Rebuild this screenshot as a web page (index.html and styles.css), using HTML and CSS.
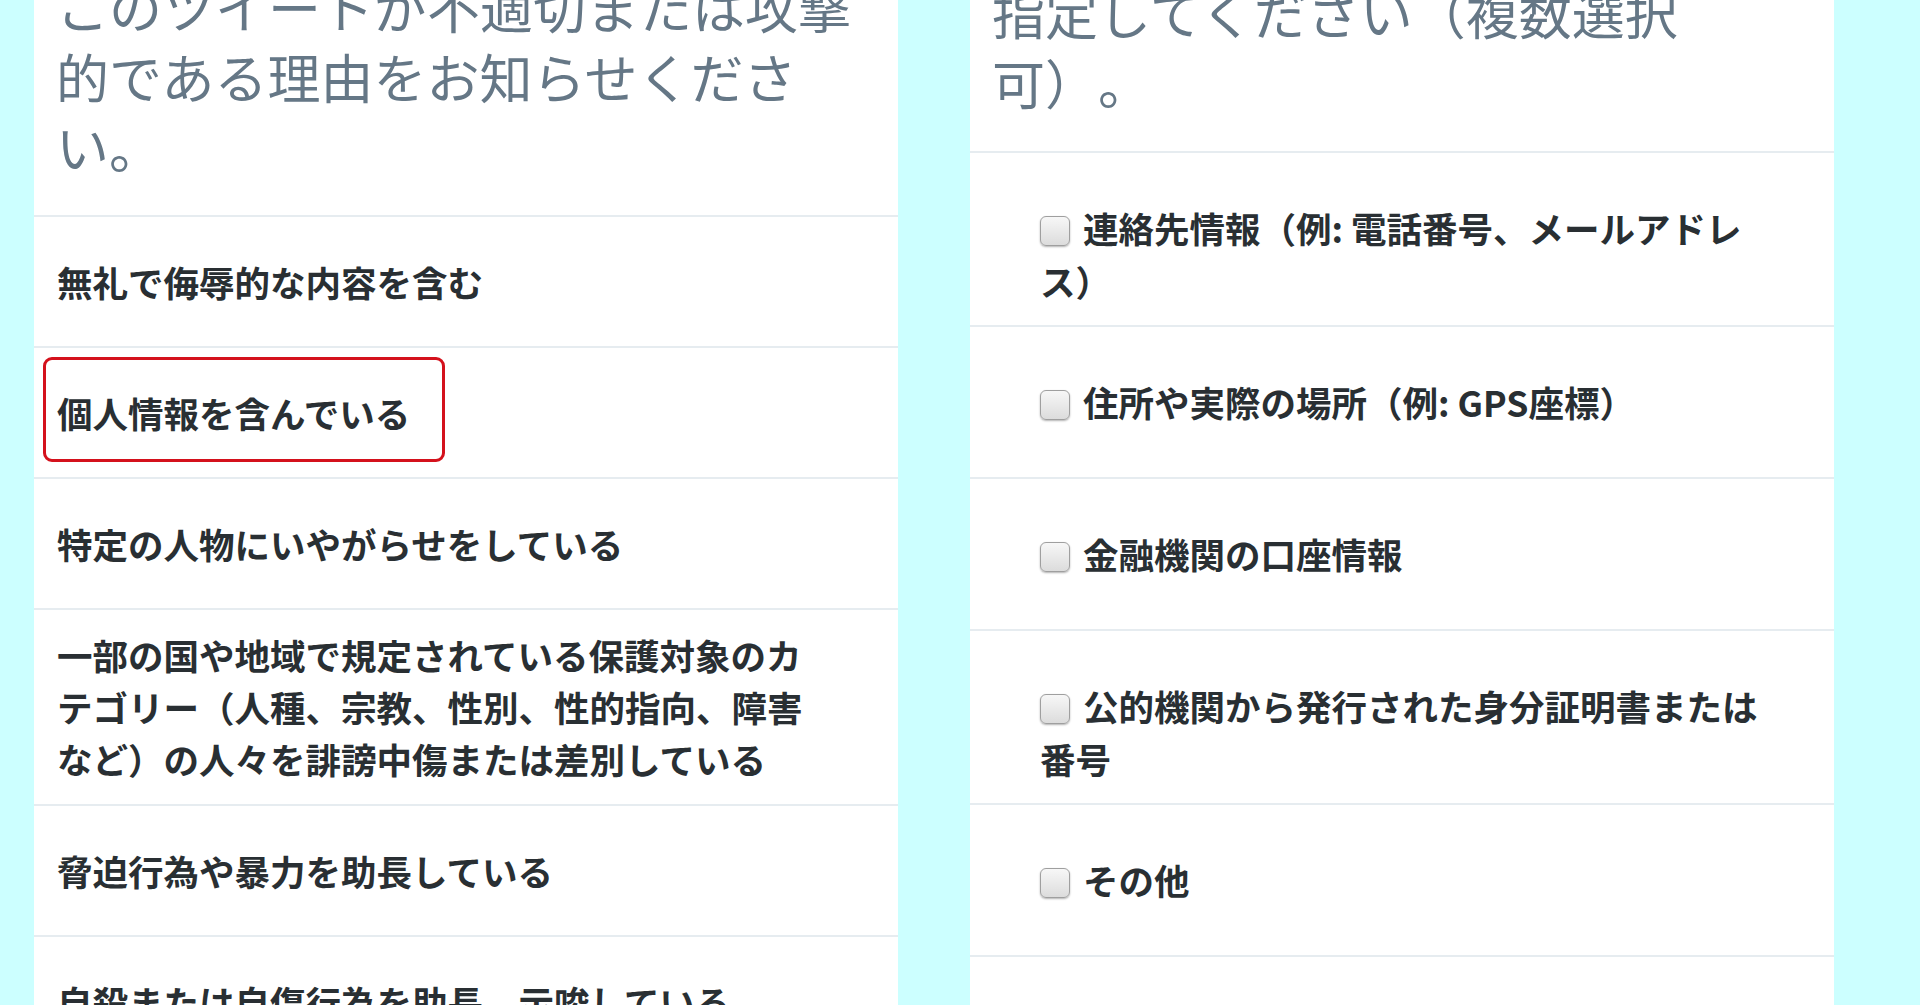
FILE: index.html
```html
<!DOCTYPE html>
<html lang="ja">
<head>
  <meta charset="UTF-8" />
  <meta name="viewport" content="width=device-width, initial-scale=1.0"/>
  <title>ツイートを報告</title>
  <link rel="stylesheet" href="styles.css">
</head>
<body>

  <main class="screens">

    <!-- 報告の理由 -->
    <section class="panel">
      <h2 class="prompt">このツイートが不適切または攻撃的である理由をお知らせください。</h2>
      <ul class="choices">
        <li class="choice">無礼で侮辱的な内容を含む</li>
        <li class="choice marked">個人情報を含んでいる</li>
        <li class="choice">特定の人物にいやがらせをしている</li>
        <li class="choice">一部の国や地域で規定されている保護対象のカテゴリー（人種、宗教、性別、性的指向、障害など）の人々を誹謗中傷または差別している</li>
        <li class="choice">脅迫行為や暴力を助長している</li>
        <li class="choice">自殺または自傷行為を助長、示唆している</li>
      </ul>
    </section>

    <!-- 個人情報の種類 -->
    <section class="panel panel-detail">
      <h2 class="prompt">含まれている個人情報の種類を<br>指定してください（複数選択可）。</h2>
      <form class="checks">
        <label class="check"><input type="checkbox" name="info" value="contact">連絡先情報（例: 電話番号、メールアドレス）</label>
        <label class="check"><input type="checkbox" name="info" value="address">住所や実際の場所（例: GPS座標）</label>
        <label class="check"><input type="checkbox" name="info" value="bank">金融機関の口座情報</label>
        <label class="check"><input type="checkbox" name="info" value="id">公的機関から発行された身分証明書または番号</label>
        <label class="check"><input type="checkbox" name="info" value="other">その他</label>
      </form>
    </section>

  </main>

</body>
</html>
```

FILE: styles.css
```css
body {
  margin: 0;
  background: #ccffff;
  font-family: "Noto Sans CJK JP", "Noto Sans", sans-serif;
  overflow: hidden;
}

.screens {
  display: flex;
  align-items: flex-start;
  gap: 72px;
  padding-left: 34px;
  margin-top: -49px;
}

.panel {
  width: 864px;
  background: #fff;
}

.panel-detail {
  margin-top: -64px;
  padding-bottom: 140px;
}

.prompt {
  margin: 0;
  padding: 20px 40px 34px 22px;
  font-size: 53px;
  line-height: 70px;
  font-weight: 400;
  color: #657786;
  border-bottom: 2px solid #e6ecf0;
  text-spacing-trim: space-all;
}

/* 理由の一覧 */
.choices {
  list-style: none;
  margin: 0;
  padding: 0;
}

.choice {
  position: relative;
  display: flex;
  align-items: center;
  box-sizing: border-box;
  min-height: 131px;
  padding: 19px 88px 19px 23px;
  border-bottom: 2px solid #e6ecf0;
  font-size: 35.5px;
  line-height: 52px;
  font-weight: 700;
  color: #292f33;
}

.choice.marked::after {
  content: "";
  position: absolute;
  top: 9px;
  left: 9px;
  width: 402px;
  height: 105px;
  box-sizing: border-box;
  border: 3px solid #d4111c;
  border-radius: 9px;
}

/* チェックボックス */
.check {
  display: block;
  box-sizing: border-box;
  min-height: 152px;
  padding: 48px 62px 18px 70px;
  border-bottom: 2px solid #e6ecf0;
  font-size: 35.5px;
  line-height: 53px;
  font-weight: 700;
  color: #292f33;
}

.check input {
  appearance: none;
  -webkit-appearance: none;
  width: 30px;
  height: 30px;
  margin: 0 13px 0 0;
  vertical-align: -3px;
  border: 1px solid #9f9f9f;
  border-radius: 6px;
  background: linear-gradient(#f7f7f7, #dcdcdc);
  box-shadow: 0 1px 2px rgba(0, 0, 0, 0.3);
}
```
